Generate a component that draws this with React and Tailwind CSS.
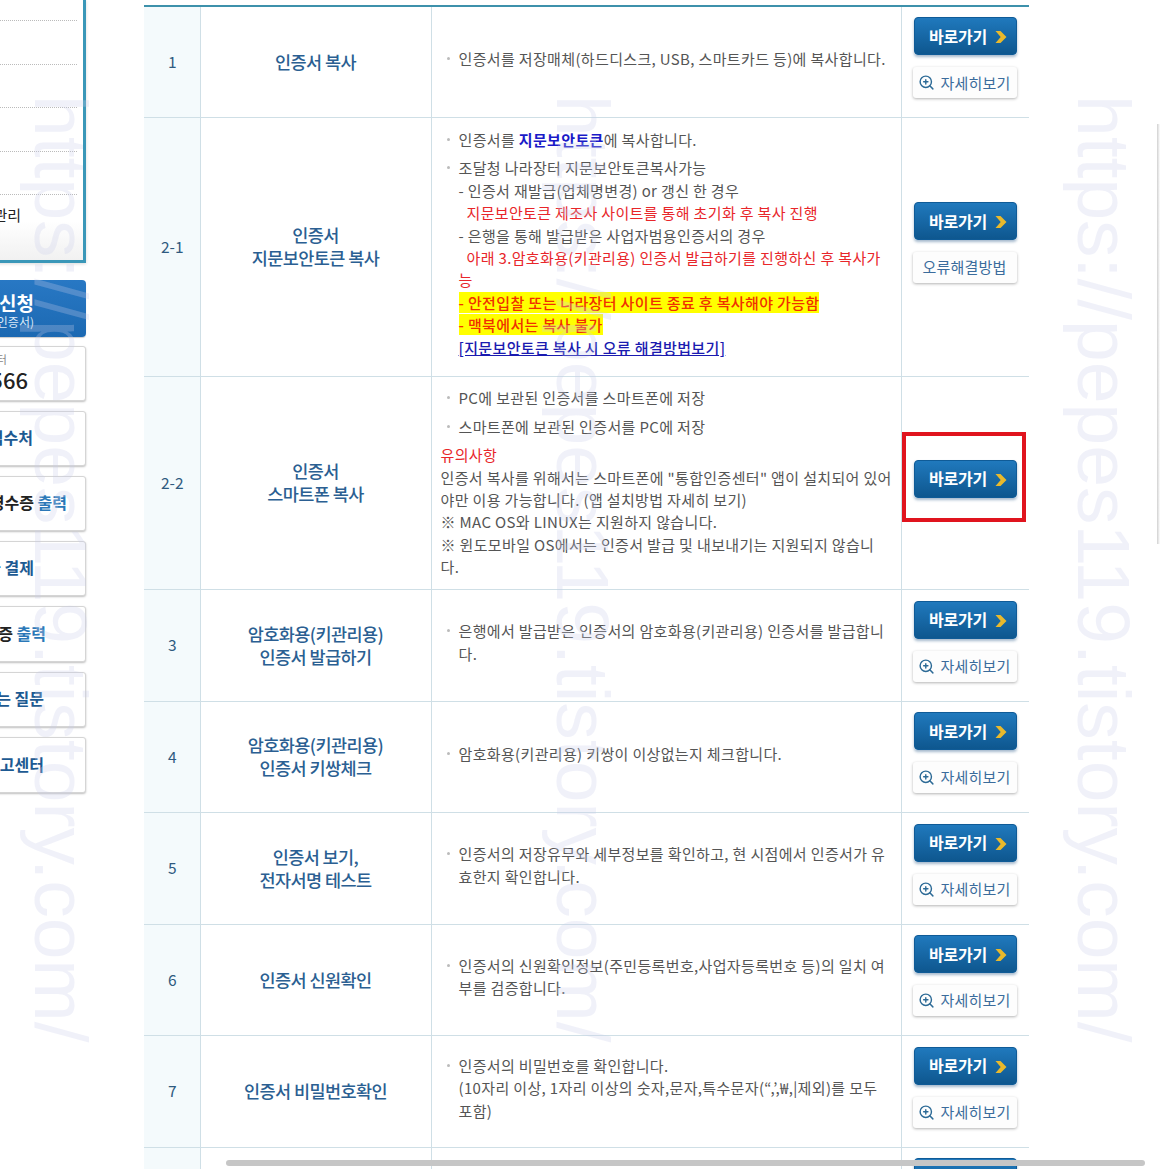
import React from 'react';
import { ZoomIn } from 'lucide-react';

const FONT = "font-['Noto_Sans_CJK_KR','Noto_Sans',sans-serif]";

const SIDE_LINKS = [
  { h: 'h-[55px]', pr: 'pr-[57px]', label: <><p className="pr-[21px] text-[11px] leading-[14px] font-normal text-[#888]">콜센터</p><p className="text-[22px] leading-[26px] font-medium text-[#222]">1566</p></> },
  { h: 'h-[55px]', pr: 'pr-[52px]', label: <span className="text-[#1d5a92]">접수처</span> },
  { h: 'h-[55px]', pr: 'pr-[18px]', label: <p><span className="text-[#222]">영수증 </span><span className="text-[#2b78b8]">출력</span></p> },
  { h: 'h-[55px]', pr: 'pr-[51px]', label: <span className="text-[#1d5a92]">요금 결제</span> },
  { h: 'h-[56px]', pr: 'pr-[39px]', label: <p><span className="text-[#222]">납입증 </span><span className="text-[#2b78b8]">출력</span></p> },
  { h: 'h-[55px]', pr: 'pr-[41px]', label: <span className="text-[#1d5a92]">자주 묻는 질문</span> },
  { h: 'h-[56px]', pr: 'pr-[41px]', label: <span className="text-[#1d5a92]">신고센터</span> },
];

const Sidebar = () => (
  <div className="w-[86px] shrink-0">
    <div className="h-[263px] ml-[-20px] border-r-[3px] border-b-[3px] border-[#3a97b8] bg-gradient-to-b from-white from-[85%] to-[#f1f1f1] shadow-[0_1px_3px_rgba(0,0,0,0.15)]">
      {[21, 44, 43, 44, 43].map((h, i) => (
        <div key={i} style={{ height: h }} className="mr-[6px] border-b border-dotted border-[#bbb]" />
      ))}
      <div className="flex justify-end whitespace-nowrap pr-[62px] pt-[8px] text-[15px] leading-[24px] text-[#222]">인증서관리</div>
    </div>
    <div className="mt-[17px] h-[57px] ml-[-20px] pt-[3px] rounded-r-[4px] bg-gradient-to-b from-[#2878c4] to-[#1c69b2] flex flex-col items-end justify-center pr-[52px] whitespace-nowrap text-white shadow-[0_1px_1px_rgba(0,0,0,0.2)]">
      <p className="text-[19px] leading-[24px] font-bold">인증서 신청</p>
      <p className="text-[12px] leading-[14px] text-[#dbe9f6]">(공인인증서)</p>
    </div>
    <div className="mt-[9px] flex flex-col gap-[10px]">
      {SIDE_LINKS.map((item, i) => (
        <div key={i} className={`${item.h} ml-[-20px] pb-[3px] rounded-[3px] border border-[#d5d5d5] bg-white shadow-[0_1px_2px_rgba(0,0,0,0.25)] flex flex-col items-end justify-center ${item.pr} whitespace-nowrap text-[16px] font-bold`}>
          {item.label}
        </div>
      ))}
    </div>
  </div>
);

const GoButton = () => (
  <a className="flex items-center justify-center gap-[8px] pl-[6px] w-[103px] h-[38px] rounded-[4px] border border-[#0f5b97] bg-gradient-to-b from-[#2079bd] to-[#0e578f] text-white text-[16px] font-bold tracking-[-0.2px] shadow-[0_2px_3px_rgba(30,80,130,0.4)]">
    바로가기
    <svg width="12" height="14" viewBox="0 0 12 14" className="mt-[2px]">
      <path d="M0.5 1h5l6 6-6 6h-5l5.2-6z" fill="#e9b92c" />
    </svg>
  </a>
);

const SubButton = ({ children, icon }) => (
  <a className="mt-[12px] ml-[-1px] flex items-center justify-center gap-[5px] w-[104px] h-[31px] rounded-[3px] bg-[#fdfdfd] text-[#3b6c9c] text-[15px] tracking-[0.2px] shadow-[0_1px_3px_rgba(0,0,0,0.3)]">
    {icon && <ZoomIn size={17} strokeWidth={2} className="text-[#2c6a96]" />}
    {children}
  </a>
);

const Bullet = ({ children }) => (
  <div className="relative pl-[18px] mb-[6px] before:absolute before:left-[6px] before:top-[9px] before:h-[3px] before:w-[3px] before:rounded-full before:bg-[#bbb]">
    {children}
  </div>
);

const Red = ({ children, indent }) => <p className={`text-[#e8262a] ${indent ? 'indent-[8px]' : ''}`}>{children}</p>;

const Mark = ({ children }) => (
  <p><span className="bg-[#ffff00] text-[#f03000] font-medium">{children}</span></p>
);

const ROWS = [
  {
    no: '1', h: 'h-[111px]', title: ['인증서 복사'], sub: '자세히보기',
    desc: <Bullet>인증서를 저장매체(하드디스크, USB, 스마트카드 등)에 복사합니다.</Bullet>,
  },
  {
    no: '2-1', h: 'h-[259px]', title: ['인증서', '지문보안토큰 복사'], sub: '오류해결방법', noIcon: true,
    desc: (
      <>
        <Bullet>인증서를 <b className="text-[#1a1ac8] font-bold">지문보안토큰</b>에 복사합니다.</Bullet>
        <Bullet>
          <p>조달청 나라장터 지문보안토큰복사가능</p>
          <p>- 인증서 재발급(업체명변경) or 갱신 한 경우</p>
          <Red indent>지문보안토큰 제조사 사이트를 통해 초기화 후 복사 진행</Red>
          <p>- 은행을 통해 발급받은 사업자범용인증서의 경우</p>
          <Red indent>아래 3.암호화용(키관리용) 인증서 발급하기를 진행하신 후 복사가<br />능</Red>
          <Mark>- 안전입찰 또는 나라장터 사이트 종료 후 복사해야 가능함</Mark>
          <Mark>- 맥북에서는 복사 불가</Mark>
          <p className="text-[#1a1ab0] font-medium underline">[지문보안토큰 복사 시 오류 해결방법보기]</p>
        </Bullet>
      </>
    ),
  },
  {
    no: '2-2', h: 'h-[213px]', title: ['인증서', '스마트폰 복사'],
    desc: (
      <>
        <Bullet>PC에 보관된 인증서를 스마트폰에 저장</Bullet>
        <Bullet>스마트폰에 보관된 인증서를 PC에 저장</Bullet>
        <div>
          <Red>유의사항</Red>
          <p>인증서 복사를 위해서는 스마트폰에 "통합인증센터" 앱이 설치되어 있어<br />야만 이용 가능합니다. (앱 설치방법 자세히 보기)</p>
          <p>※ MAC OS와 LINUX는 지원하지 않습니다.</p>
          <p>※&nbsp;윈도모바일 OS에서는 인증서 발급 및 내보내기는 지원되지 않습니<br />다.</p>
        </div>
      </>
    ),
  },
  {
    no: '3', h: 'h-[112px]', title: ['암호화용(키관리용)', '인증서 발급하기'], sub: '자세히보기',
    desc: <Bullet>은행에서 발급받은 인증서의 암호화용(키관리용) 인증서를 발급합니다.</Bullet>,
  },
  {
    no: '4', h: 'h-[111px]', title: ['암호화용(키관리용)', '인증서 키쌍체크'], sub: '자세히보기',
    desc: <Bullet>암호화용(키관리용) 키쌍이 이상없는지 체크합니다.</Bullet>,
  },
  {
    no: '5', h: 'h-[112px]', title: ['인증서 보기,', '전자서명 테스트'], sub: '자세히보기',
    desc: <Bullet>인증서의 저장유무와 세부정보를 확인하고, 현 시점에서 인증서가 유효한지 확인합니다.</Bullet>,
  },
  {
    no: '6', h: 'h-[111px]', title: ['인증서 신원확인'], sub: '자세히보기',
    desc: <Bullet>인증서의 신원확인정보(주민등록번호,사업자등록번호 등)의 일치 여부를 검증합니다.</Bullet>,
  },
  {
    no: '7', h: 'h-[112px]', title: ['인증서 비밀번호확인'], sub: '자세히보기',
    desc: (
      <Bullet>
        <p>인증서의 비밀번호를 확인합니다.</p>
        <p>(10자리 이상, 1자리 이상의 숫자,문자,특수문자(“,’,₩,|제외)를 모두<br />포함)</p>
      </Bullet>
    ),
  },
];

const Watermark = ({ left }) => (
  <div
    style={{ left }}
    className="absolute top-[95px] pointer-events-none whitespace-nowrap [writing-mode:vertical-rl] font-['Liberation_Sans',sans-serif] text-[75px] leading-[75px] text-[rgba(200,205,235,0.28)]"
  >
    https://pepes119.tistory.com/
  </div>
);

export default function App() {
  return (
    <div className={`relative h-[1169px] w-[1160px] overflow-hidden bg-white ${FONT}`}>
      <div className="flex items-start">
        <Sidebar />
        <table className="ml-[58px] mt-[5px] w-[885px] table-fixed border-t-[2px] border-[#3d91ab] text-[15px] leading-[22.4px] text-[#555] tracking-[0.35px]">
          <colgroup>
            <col className="w-[56px]" />
            <col className="w-[231px]" />
            <col className="w-[470px]" />
            <col className="w-[128px]" />
          </colgroup>
          <tbody>
            {ROWS.map(row => (
              <tr key={row.no} className={`${row.h} border-b border-[#cfdfe6]`}>
                <td className="bg-[#f4fafc] border-r border-[#cfdfe6] pb-[1px] pl-[1px] text-center text-[15.5px] tracking-normal text-[#2f5a80]">{row.no}</td>
                <td className="border-r border-[#cfdfe6] pb-[1px] text-center text-[17.5px] leading-[23px] font-medium tracking-[-0.6px] text-[#2b5f92]">
                  {row.title.map(t => <p key={t}>{t}</p>)}
                </td>
                <td className="border-r border-[#cfdfe6] pt-[1px] pl-[9px] pr-[4px] break-all">{row.desc}</td>
                <td className="pl-[12px] pb-[8px] align-middle">
                  <GoButton />
                  {row.sub && <SubButton icon={!row.noIcon}>{row.sub}</SubButton>}
                </td>
              </tr>
            ))}
            <tr className="h-[60px]">
              <td className="bg-[#f4fafc] border-r border-[#cfdfe6]" />
              <td className="border-r border-[#cfdfe6]" />
              <td className="border-r border-[#cfdfe6]" />
              <td className="pl-[12px] pt-[10px] align-top"><GoButton /></td>
            </tr>
          </tbody>
        </table>
      </div>

      {/* highlight drawn on top of the screenshot */}
      <div className="absolute left-[902px] top-[432px] w-[124px] h-[90px] border-[4px] border-[#e0141e] pointer-events-none" />

      <Watermark left={23} />
      <Watermark left={545} />
      <Watermark left={1066} />

      {/* browser scrollbars */}
      <div className="absolute left-[226px] w-[919px] bottom-[3px] h-[6px] rounded-full bg-[#c6c6c6]" />
      <div className="absolute left-[1157px] top-[124px] h-[420px] w-[3px] bg-gradient-to-r from-[#d0d0d0] to-white" />
    </div>
  );
}
